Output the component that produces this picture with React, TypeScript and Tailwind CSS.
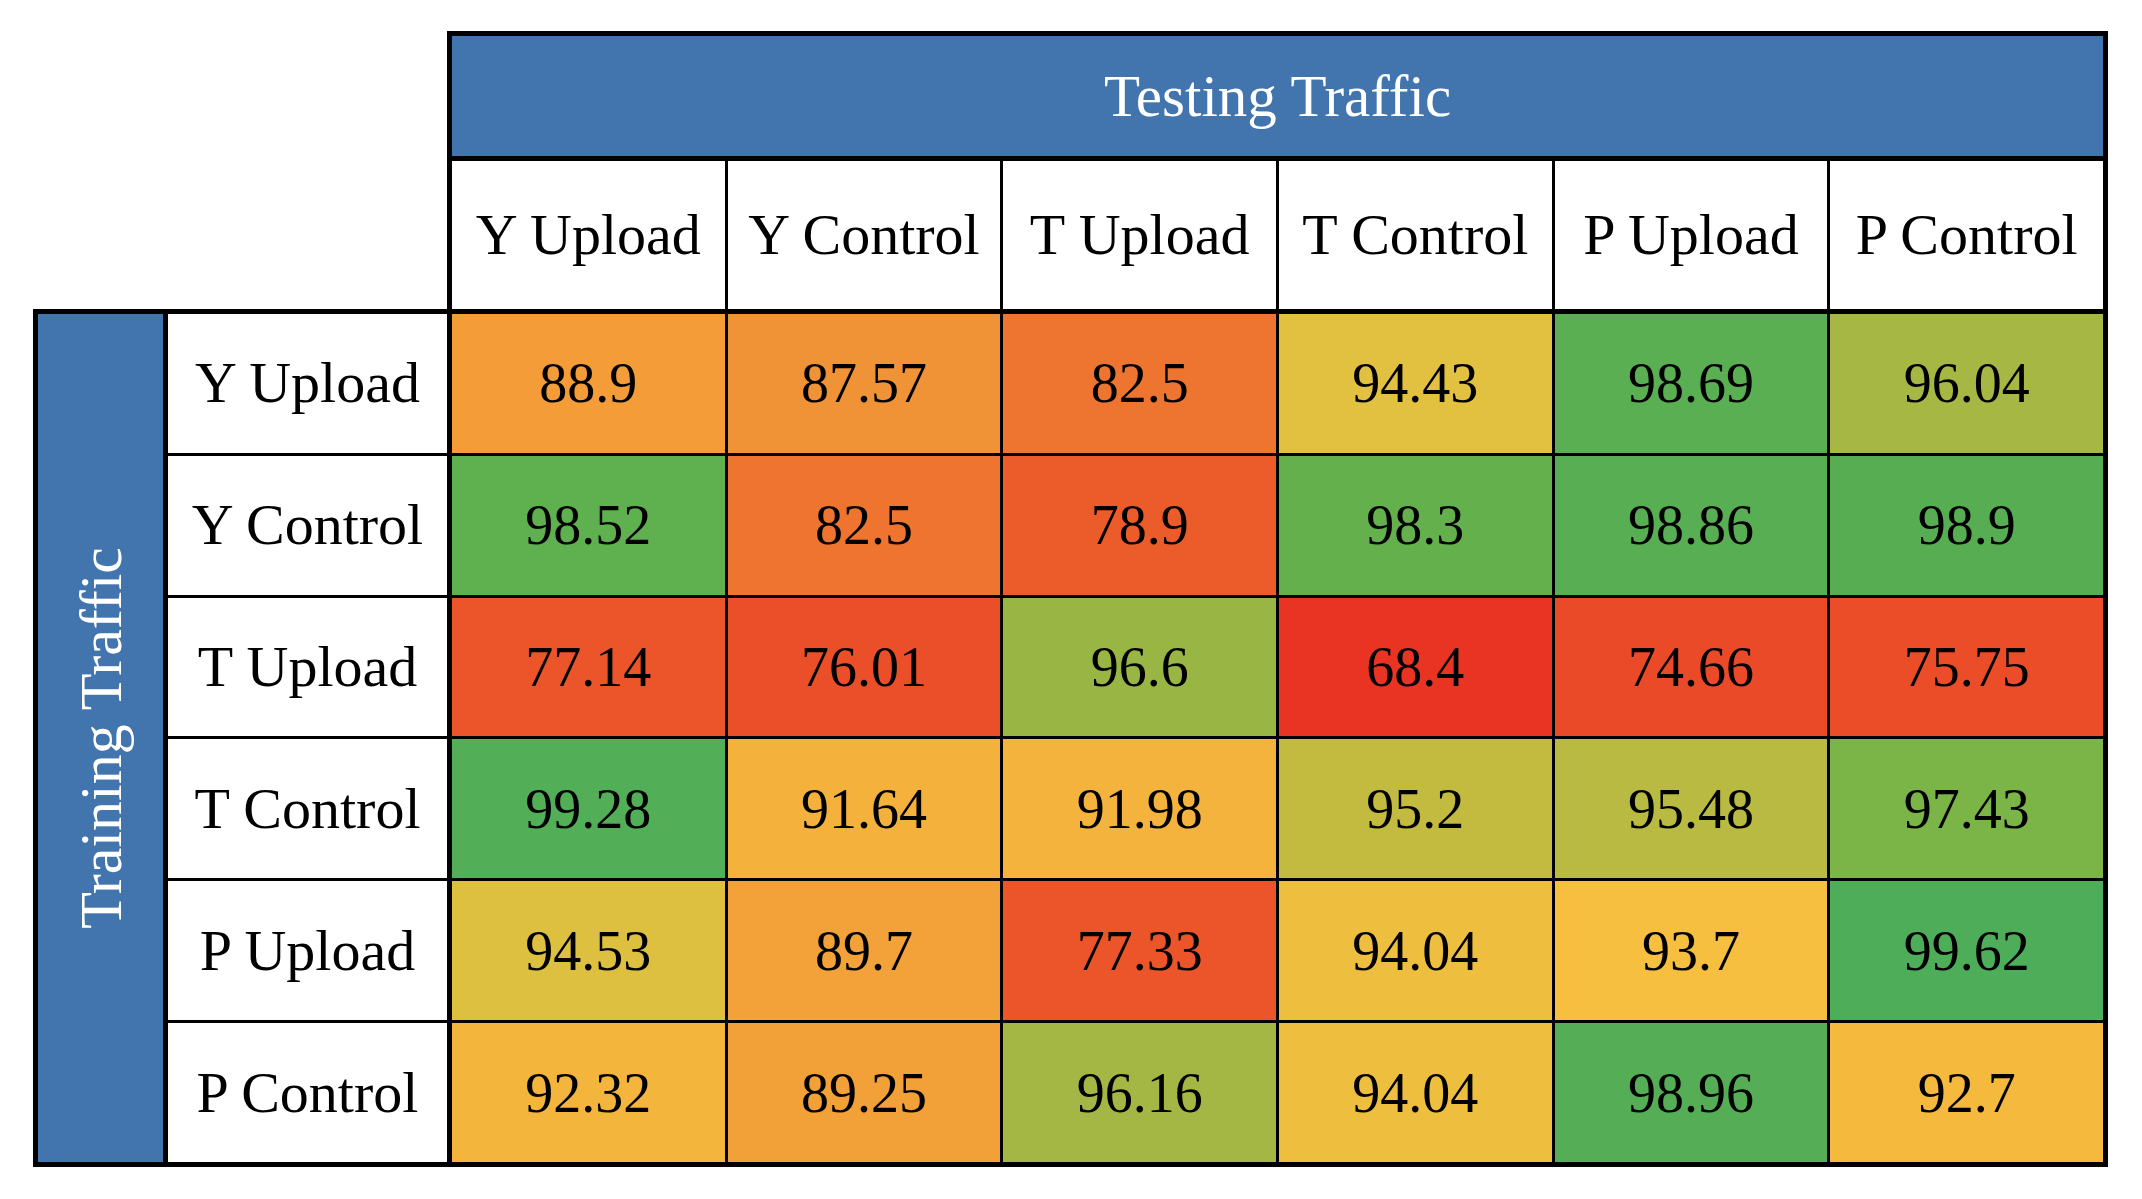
const cols = ['Y Upload', 'Y Control', 'T Upload', 'T Control', 'P Upload', 'P Control'];

// each cell: [value, background class]
const rows: { label: string; cells: [string, string][] }[] = [
  {
    label: 'Y Upload',
    cells: [
      ['88.9', 'bg-[#f39c38]'],
      ['87.57', 'bg-[#f09236]'],
      ['82.5', 'bg-[#ee7530]'],
      ['94.43', 'bg-[#e2c040]'],
      ['98.69', 'bg-[#5aaf53]'],
      ['96.04', 'bg-[#a6b843]'],
    ],
  },
  {
    label: 'Y Control',
    cells: [
      ['98.52', 'bg-[#5fb04e]'],
      ['82.5', 'bg-[#ef7430]'],
      ['78.9', 'bg-[#ec5b2a]'],
      ['98.3', 'bg-[#63b04d]'],
      ['98.86', 'bg-[#58ae53]'],
      ['98.9', 'bg-[#57ae52]'],
    ],
  },
  {
    label: 'T Upload',
    cells: [
      ['77.14', 'bg-[#ec5429]'],
      ['76.01', 'bg-[#eb4f29]'],
      ['96.6', 'bg-[#99b543]'],
      ['68.4', 'bg-[#e93424]'],
      ['74.66', 'bg-[#eb4a28]'],
      ['75.75', 'bg-[#eb4d28]'],
    ],
  },
  {
    label: 'T Control',
    cells: [
      ['99.28', 'bg-[#52ae57]'],
      ['91.64', 'bg-[#f4b13c]'],
      ['91.98', 'bg-[#f4b33c]'],
      ['95.2', 'bg-[#c3bb40]'],
      ['95.48', 'bg-[#b9ba41]'],
      ['97.43', 'bg-[#7bb447]'],
    ],
  },
  {
    label: 'P Upload',
    cells: [
      ['94.53', 'bg-[#dec041]'],
      ['89.7', 'bg-[#f2a238]'],
      ['77.33', 'bg-[#ec552a]'],
      ['94.04', 'bg-[#eebf3f]'],
      ['93.7', 'bg-[#f6bf3f]'],
      ['99.62', 'bg-[#4dad59]'],
    ],
  },
  {
    label: 'P Control',
    cells: [
      ['92.32', 'bg-[#f4b53d]'],
      ['89.25', 'bg-[#f2a038]'],
      ['96.16', 'bg-[#a4b744]'],
      ['94.04', 'bg-[#eebf3f]'],
      ['98.96', 'bg-[#55ae56]'],
      ['92.7', 'bg-[#f4b93d]'],
    ],
  },
];

export default function App() {
  return (
    <div className="min-h-screen bg-white pl-[33px] pt-[31px] font-['Liberation_Serif','DejaVu_Serif',serif] text-[56px] leading-none text-black">
      <div className="w-[2075px]">
        {/* Top: testing traffic header */}
        <div className="flex">
          <div className="w-[414px] shrink-0" />
          <div className="w-[1661px] border-x-[5px] border-t-[5px] border-black">
            <div className="flex h-[120px] items-center justify-center bg-[#4274ae] text-[59px] text-white">
              Testing Traffic
            </div>
            <div className="grid h-[153px] grid-cols-6 gap-x-[3px] border-t-[5px] border-black bg-black">
              {cols.map((c) => (
                <div key={c} className="flex items-center justify-center bg-white text-[58px]">
                  {c}
                </div>
              ))}
            </div>
          </div>
        </div>

        {/* Bottom: training traffic rows */}
        <div className="flex h-[858px] border-[5px] border-black">
          <div className="flex w-[130px] shrink-0 items-center justify-center border-r-[5px] border-black bg-[#4274ae] text-[60px] text-white">
            <span className="rotate-180 [writing-mode:vertical-rl]">Training Traffic</span>
          </div>
          <div className="grid w-[284px] shrink-0 grid-rows-6 gap-y-[3px] border-r-[5px] border-black bg-black">
            {rows.map((r) => (
              <div key={r.label} className="flex items-center justify-center bg-white text-[58px]">
                {r.label}
              </div>
            ))}
          </div>
          <div className="grid flex-1 grid-cols-6 grid-rows-6 gap-[3px] bg-black">
            {rows.map((r) =>
              r.cells.map(([v, bg], i) => (
                <div key={r.label + i} className={`flex items-center justify-center ${bg}`}>
                  {v}
                </div>
              ))
            )}
          </div>
        </div>
      </div>
    </div>
  );
}
